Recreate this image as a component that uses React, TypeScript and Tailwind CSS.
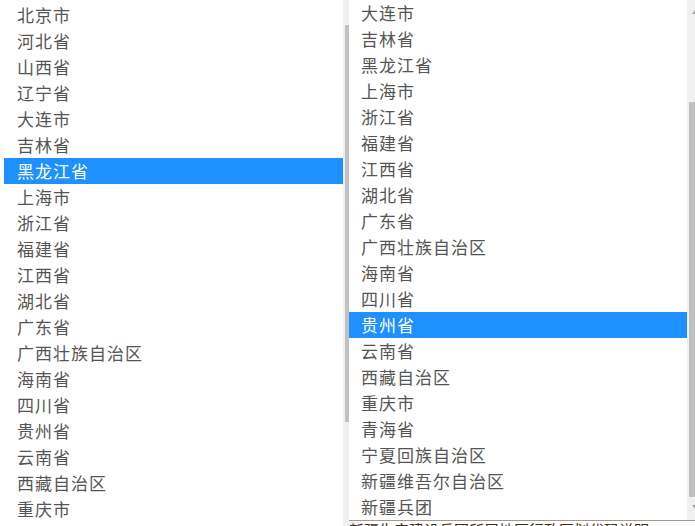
const leftItems = [
  "北京市",
  "河北省",
  "山西省",
  "辽宁省",
  "大连市",
  "吉林省",
  "黑龙江省",
  "上海市",
  "浙江省",
  "福建省",
  "江西省",
  "湖北省",
  "广东省",
  "广西壮族自治区",
  "海南省",
  "四川省",
  "贵州省",
  "云南省",
  "西藏自治区",
  "重庆市",
];

const rightItems = [
  "大连市",
  "吉林省",
  "黑龙江省",
  "上海市",
  "浙江省",
  "福建省",
  "江西省",
  "湖北省",
  "广东省",
  "广西壮族自治区",
  "海南省",
  "四川省",
  "贵州省",
  "云南省",
  "西藏自治区",
  "重庆市",
  "青海省",
  "宁夏回族自治区",
  "新疆维吾尔自治区",
  "新疆兵团",
];

function Row({ label, active, pad }: { label: string; active: boolean; pad: string }) {
  return (
    <li
      className={`h-[26px] flex items-center whitespace-nowrap ${pad} ${
        active ? "bg-[#1e90ff] text-white" : "text-[#555]"
      }`}
    >
      {label}
    </li>
  );
}

export default function App() {
  return (
    <div
      className="relative w-[695px] h-[526px] overflow-hidden bg-white text-[17px] tracking-[1px]"
      style={{ fontFamily: '"Noto Sans CJK SC", "Noto Sans", sans-serif' }}
    >
      <div className="flex">
        <ul className="ml-[4px] w-[339px] pt-[2px]">
          {leftItems.map((p) => (
            <Row key={p} label={p} active={p === "黑龙江省"} pad="pl-[13px]" />
          ))}
        </ul>
        <div className="w-[17px] h-[526px] bg-[#f0f0f0] pt-[25px] pl-[2px]">
          <div className="w-[13px] h-[397px] bg-[#c1c1c1]" />
        </div>
      </div>

      {/* page text peeking out below the dropdown */}
      <div className="absolute left-[349px] top-[519px] text-[15px] tracking-normal text-[#3a2f20] whitespace-nowrap">
        新疆生产建设兵团所属地区行政区划代码说明
      </div>

      <div className="absolute left-[349px] top-0 w-[360px] h-[521px] flex bg-white border-b border-[#a39a8c]">
        <ul className="w-[338px]">
          {rightItems.map((p) => (
            <Row key={p} label={p} active={p === "贵州省"} pad="pl-[12px]" />
          ))}
        </ul>
        <div className="relative w-[17px] h-full bg-[#f0f0f0] pt-[102px] pl-[2px]">
          <div className="absolute top-[10px] left-[5px] w-0 h-0 border-l-[3px] border-r-[3px] border-b-[4px] border-l-transparent border-r-transparent border-b-[#a3a3a3]" />
          <div className="w-[13px] h-[395px] bg-[#c1c1c1]" />
          <div className="absolute top-[505px] left-[5px] w-0 h-0 border-l-[3px] border-r-[3px] border-t-[4px] border-l-transparent border-r-transparent border-t-[#a3a3a3]" />
        </div>
      </div>
    </div>
  );
}
